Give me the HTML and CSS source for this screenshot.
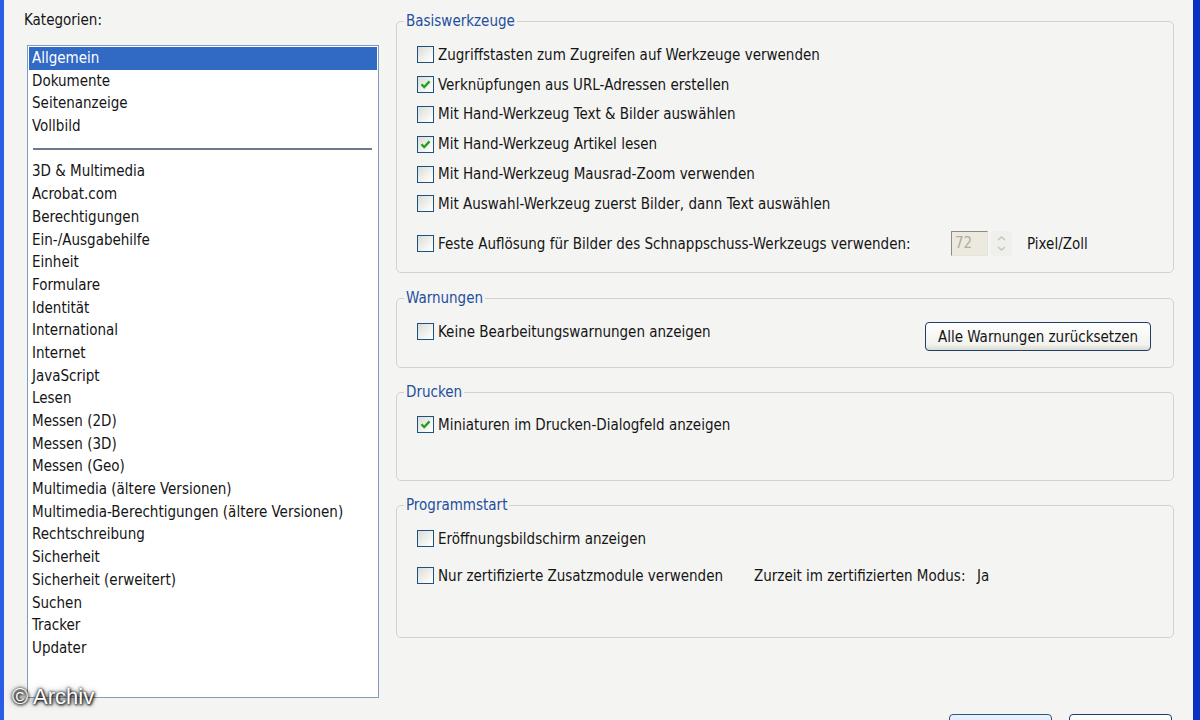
FILE: index.html
```html
<!DOCTYPE html>
<html lang="de">
<head>
  <meta charset="UTF-8">
  <title>Voreinstellungen</title>
  <link rel="stylesheet" href="styles.css">
</head>
<body>
<div class="window">
  <div class="main">
    <div class="sidebar">
      <div class="caption">Kategorien:</div>
      <div class="listbox">
        <div class="item selected">Allgemein</div>
        <div class="item">Dokumente</div>
        <div class="item">Seitenanzeige</div>
        <div class="item">Vollbild</div>
        <div class="sep"></div>
        <div class="item">3D &amp; Multimedia</div>
        <div class="item">Acrobat.com</div>
        <div class="item">Berechtigungen</div>
        <div class="item">Ein-/Ausgabehilfe</div>
        <div class="item">Einheit</div>
        <div class="item">Formulare</div>
        <div class="item">Identität</div>
        <div class="item">International</div>
        <div class="item">Internet</div>
        <div class="item">JavaScript</div>
        <div class="item">Lesen</div>
        <div class="item">Messen (2D)</div>
        <div class="item">Messen (3D)</div>
        <div class="item">Messen (Geo)</div>
        <div class="item">Multimedia (ältere Versionen)</div>
        <div class="item">Multimedia-Berechtigungen (ältere Versionen)</div>
        <div class="item">Rechtschreibung</div>
        <div class="item">Sicherheit</div>
        <div class="item">Sicherheit (erweitert)</div>
        <div class="item">Suchen</div>
        <div class="item">Tracker</div>
        <div class="item">Updater</div>
      </div>
    </div>

    <div class="panel">
      <fieldset class="group basis">
        <legend>Basiswerkzeuge</legend>
        <div class="row"><span class="check"></span>Zugriffstasten zum Zugreifen auf Werkzeuge verwenden</div>
        <div class="row"><span class="check on"><svg viewBox="0 0 15 15"><path d="M3.5 7.2 L6.2 10 L11.5 4.4"/></svg></span>Verknüpfungen aus URL-Adressen erstellen</div>
        <div class="row"><span class="check"></span>Mit Hand-Werkzeug Text &amp; Bilder auswählen</div>
        <div class="row"><span class="check on"><svg viewBox="0 0 15 15"><path d="M3.5 7.2 L6.2 10 L11.5 4.4"/></svg></span>Mit Hand-Werkzeug Artikel lesen</div>
        <div class="row"><span class="check"></span>Mit Hand-Werkzeug Mausrad-Zoom verwenden</div>
        <div class="row"><span class="check"></span>Mit Auswahl-Werkzeug zuerst Bilder, dann Text auswählen</div>
        <div class="row spin-row">
          <span class="label-fixed res"><span class="check"></span>Feste Auflösung für Bilder des Schnappschuss-Werkzeugs verwenden:</span>
          <span class="spin-field">72</span>
          <span class="spinner">
            <svg viewBox="0 0 21 25"><path d="M7 9 L10.5 6 L14 9"/><path d="M7 16 L10.5 19 L14 16"/></svg>
          </span>
          <span class="unit">Pixel/Zoll</span>
        </div>
      </fieldset>

      <fieldset class="group warn">
        <legend>Warnungen</legend>
        <div class="row-split">
          <div class="row"><span class="check"></span>Keine Bearbeitungswarnungen anzeigen</div>
          <button class="btn reset">Alle Warnungen zurücksetzen</button>
        </div>
      </fieldset>

      <fieldset class="group print">
        <legend>Drucken</legend>
        <div class="row"><span class="check on"><svg viewBox="0 0 15 15"><path d="M3.5 7.2 L6.2 10 L11.5 4.4"/></svg></span>Miniaturen im Drucken-Dialogfeld anzeigen</div>
      </fieldset>

      <fieldset class="group start">
        <legend>Programmstart</legend>
        <div class="row"><span class="check"></span>Eröffnungsbildschirm anzeigen</div>
        <div class="row second">
          <span class="label-fixed cert"><span class="check"></span>Nur zertifizierte Zusatzmodule verwenden</span>
          <span class="mode">Zurzeit im zertifizierten Modus:</span>
          <span>Ja</span>
        </div>
      </fieldset>
    </div>
  </div>

  <!-- OK / Abbrechen, only their top edge is in view -->
  <div class="footer">
    <button class="btn default" aria-label="OK"></button>
    <button class="btn" aria-label="Abbrechen"></button>
  </div>

  <div class="watermark">© Archiv</div>
</div>
</body>
</html>
```

FILE: styles.css
```css
:root {
  --bg:#f4f4f2;
  --text:#151515;
  --legend:#1f4f9e;
  --group-border:#d3d3ca;
}

body {
  margin:0;
  width:1200px;
  height:720px;
  overflow:hidden;
  background:var(--bg);
  font-family:"DejaVu Sans Condensed", "DejaVu Sans", sans-serif;
  font-size:15px;
  color:var(--text);
}

.window {
  position:relative;
  height:720px;
  box-sizing:border-box;
  border-left:4px solid #2b5ee6;
  border-right:7px solid #0a30c2;
  display:flex;
  flex-direction:column;
}

.main {
  display:flex;
  gap:17px;
  padding:11px 0 0 20px;
}

/* categories */
.sidebar {
  width:355px;
  flex:none;
}
.caption {
  height:18px;
  line-height:18px;
}
.listbox {
  margin:16px 0 0 3px;
  width:352px;
  height:653px;
  box-sizing:border-box;
  border:1px solid #7f9db9;
  background:#fff;
  padding:1px;
}
.item {
  height:22.7px;
  line-height:22.7px;
  padding-left:3px;
  white-space:nowrap;
}
.item.selected {
  background:#316ac5;
  color:#fff;
}
.sep {
  height:22.7px;
  display:flex;
  align-items:center;
  padding:0 5px 0 4px;
}
.sep::before {
  content:'';
  flex:1;
  border-top:2px solid #6c7a89;
}

/* settings */
.panel {
  width:778px;
  padding-top:1px;
  display:flex;
  flex-direction:column;
}
.group {
  margin:0;
  min-width:0;
  box-sizing:border-box;
  border:1px solid var(--group-border);
  border-radius:5px;
  padding:10px 22px 0 20px;
}
.group legend {
  color:var(--legend);
  padding:0 2px;
  margin-left:-13px;
  line-height:18px;
}
.basis { height:261px; }
.warn { height:79px; margin-top:16px; }
.print { height:98px; margin-top:15px; padding-top:9px; }
.start { height:142px; margin-top:15px; }

.row {
  display:flex;
  align-items:center;
  height:29.8px;
  white-space:nowrap;
}
.spin-row { margin-top:10px; }

.check {
  flex:none;
  width:15px;
  height:15px;
  border:1px solid #1c5180;
  background:linear-gradient(135deg, #dcdcd6, #f6f6f4 70%, #fff);
  margin-right:4px;
  display:inline-flex;
}
.check svg {
  width:15px;
  height:15px;
}
.check path {
  fill:none;
  stroke:#22a022;
  stroke-width:2.3;
}

.label-fixed {
  display:flex;
  align-items:center;
  flex:none;
}
.res { width:534px; }
.spin-field {
  width:37px;
  height:25px;
  box-sizing:border-box;
  border:1px solid;
  border-color:#8c8c84 #e4e4dc #e4e4dc #8c8c84;
  background:#ece9df;
  color:#b0ad9f;
  line-height:23px;
  padding-left:3px;
}
.spinner {
  width:21px;
  height:25px;
  margin-left:3px;
  background:#efefec;
  border-radius:2px;
}
.spinner svg {
  width:21px;
  height:25px;
}
.spinner path {
  fill:none;
  stroke:#c4c4bc;
  stroke-width:1.5;
}
.unit { margin-left:15px; }

.row-split {
  display:flex;
  justify-content:space-between;
  align-items:flex-start;
}

.btn {
  font-family:inherit;
  font-size:15px;
  color:var(--text);
  border:1px solid #1f3f66;
  border-radius:4px;
  background:linear-gradient(#ffffff, #f2f2ee 80%, #dcdcd4);
  padding:0;
}
.reset {
  width:226px;
  height:29px;
  margin-top:5px;
}

.start .second { margin-top:7px; }
.cert { width:337px; }
.mode { width:223px; }

.footer {
  display:flex;
  justify-content:flex-end;
  gap:17px;
  padding:16px 21px 0 0;
}
.footer .btn {
  width:103px;
  height:24px;
}
.footer .default {
  background:linear-gradient(#eaf2ff, #c6dbf8);
  border-color:#33557a;
}

.watermark {
  position:absolute;
  left:8px;
  bottom:10px;
  font-family:"Liberation Sans", sans-serif;
  font-size:22px;
  color:#fff;
  text-shadow:0 0 3px #000, 1px 1px 3px #000, 0 0 6px rgba(0,0,0,.6);
}
```
